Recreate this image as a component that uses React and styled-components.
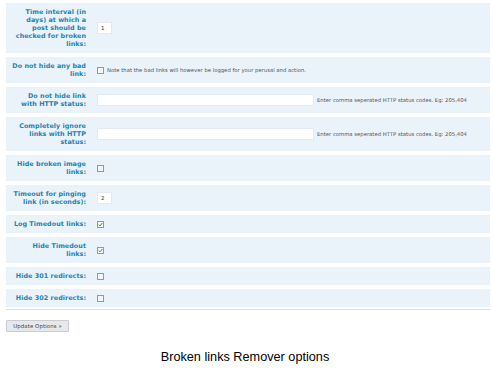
import React from "react";
import styled, { createGlobalStyle } from "styled-components";

const GlobalStyle = createGlobalStyle`
  html, body {
    margin: 0;
    padding: 0;
    background: #fff;
  }
  body {
    font-family: "DejaVu Sans", Verdana, sans-serif;
  }
`;

const Page = styled.div`
  width: 492px;
  height: 372px;
  padding: 3px 2px 0 6px;
  box-sizing: border-box;
  display: flex;
  flex-direction: column;
`;

const Form = styled.div`
  display: flex;
  flex-direction: column;
  gap: 4px;
  padding-bottom: 2px;
  border-bottom: 1px solid #e3dedb;
`;

const Row = styled.div`
  display: flex;
  align-items: center;
  background: #eaf2fa;
  padding: 5px 0;
`;

const Label = styled.div`
  width: 74px;
  margin-left: 6px;
  margin-right: 10px;
  flex-shrink: 0;
  text-align: right;
  font-weight: bold;
  font-size: 6.4px;
  line-height: 8px;
  color: #2583ad;
  letter-spacing: 0.05px;
`;

const Field = styled.div`
  display: flex;
  align-items: center;
  gap: 3px;
  margin-left: 1px;
`;

const TextBox = styled.div`
  width: ${(p) => p.$w}px;
  height: 12px;
  box-sizing: border-box;
  background: #fff;
  border: 1px solid #e4eaf1;
  font-size: 5.5px;
  line-height: 10px;
  padding-left: 3px;
  color: #333;
`;

const Hint = styled.span`
  font-size: 5.3px;
  color: #555;
  white-space: nowrap;
`;

const Box = styled.span`
  width: 7px;
  height: 7px;
  box-sizing: border-box;
  border: 1px solid #8f9aa6;
  background: #f4f6f9;
  display: inline-flex;
  align-items: center;
  justify-content: center;
  flex-shrink: 0;
`;

const Check = () => (
  <svg width="5" height="5" viewBox="0 0 10 10">
    <path d="M1.5 5.2 L4 7.8 L8.6 2" fill="none" stroke="#3a9c2a" strokeWidth="2" />
  </svg>
);

const Checkbox = ({ checked }) => <Box>{checked ? <Check /> : null}</Box>;

const Button = styled.div`
  margin-top: 10px;
  width: 63px;
  height: 12px;
  box-sizing: border-box;
  border: 1px solid #c9cdd1;
  background: #e6e8ea;
  border-radius: 1px;
  font-size: 5.4px;
  line-height: 10px;
  color: #444;
  text-align: center;
  letter-spacing: 0.1px;
`;

const Caption = styled.div`
  margin-top: 18px;
  margin-left: -6px;
  text-align: center;
  font-family: "Liberation Sans", Arial, sans-serif;
  font-size: 12.7px;
  color: #000;
`;

const App = () => {
  return (
    <>
      <GlobalStyle />
      <Page>
        <Form>
          <Row>
            <Label>Time interval (in days) at which a post should be checked for broken links:</Label>
            <Field>
              <TextBox $w={15}>1</TextBox>
            </Field>
          </Row>
          <Row>
            <Label>Do not hide any bad link:</Label>
            <Field>
              <Checkbox />
              <Hint>Note that the bad links will however be logged for your perusal and action.</Hint>
            </Field>
          </Row>
          <Row>
            <Label>Do not hide link with HTTP status:</Label>
            <Field>
              <TextBox $w={217} />
              <Hint>Enter comma seperated HTTP status codes. Eg: 205,404</Hint>
            </Field>
          </Row>
          <Row>
            <Label>Completely ignore links with HTTP status:</Label>
            <Field>
              <TextBox $w={217} />
              <Hint>Enter comma seperated HTTP status codes. Eg: 205,404</Hint>
            </Field>
          </Row>
          <Row>
            <Label>Hide broken image links:</Label>
            <Field>
              <Checkbox />
            </Field>
          </Row>
          <Row>
            <Label>Timeout for pinging link (in seconds):</Label>
            <Field>
              <TextBox $w={15}>2</TextBox>
            </Field>
          </Row>
          <Row>
            <Label>Log Timedout links:</Label>
            <Field>
              <Checkbox checked />
            </Field>
          </Row>
          <Row>
            <Label>Hide Timedout links:</Label>
            <Field>
              <Checkbox checked />
            </Field>
          </Row>
          <Row>
            <Label>Hide 301 redirects:</Label>
            <Field>
              <Checkbox />
            </Field>
          </Row>
          <Row>
            <Label>Hide 302 redirects:</Label>
            <Field>
              <Checkbox />
            </Field>
          </Row>
        </Form>
        <Button>Update Options »</Button>
        <Caption>Broken links Remover options</Caption>
      </Page>
    </>
  );
};

export default App;
